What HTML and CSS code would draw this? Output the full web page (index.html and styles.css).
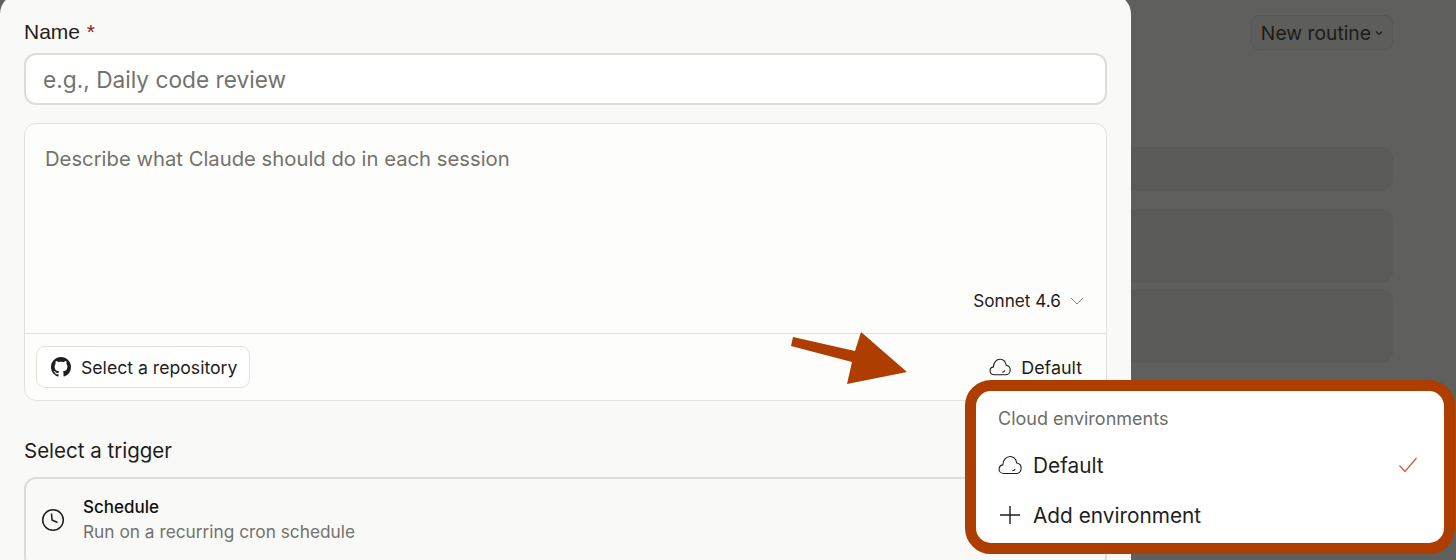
FILE: index.html
```html
<!DOCTYPE html>
<html lang="en">
  <head>
    <meta charset="UTF-8" />
    <meta name="viewport" content="width=device-width, initial-scale=1.0" />
    <title>New routine</title>
    <link rel="stylesheet" href="styles.css">
  </head>

  <body>
    <div class="page">
      <div class="backdrop">
        <div class="top-bar">
          <div class="new-btn">New routine
            <svg width="8" height="6" viewBox="0 0 8 6"><path d="M1 1.5 4 4.5 7 1.5" fill="none" stroke="#1c1c1a" stroke-width="1.2"/></svg>
          </div>
        </div>
        <div class="bg-row row-a"></div>
        <div class="bg-row row-b"></div>
        <div class="bg-row row-b"></div>
      </div>

      <div class="modal">
        <div class="label">Name <span class="req">*</span></div>
        <div class="name-input">e.g., Daily code review</div>

        <div class="editor">
          <div class="prompt">Describe what Claude should do in each session</div>
          <div class="model-row">
            Sonnet 4.6
            <svg width="14" height="8" viewBox="0 0 14 8"><path d="M1 1 7 7 13 1" fill="none" stroke="#8a8a85" stroke-width="1"/></svg>
          </div>
          <div class="editor-foot">
            <div class="repo-btn">
              <svg width="20" height="20" viewBox="0 0 16 16"><path fill="#1f1e1d" d="M8 0C3.58 0 0 3.58 0 8c0 3.54 2.29 6.53 5.47 7.59.4.07.55-.17.55-.38 0-.19-.01-.82-.01-1.49-2.01.37-2.53-.49-2.69-.94-.09-.23-.48-.94-.82-1.13-.28-.15-.68-.52-.01-.53.63-.01 1.08.58 1.23.82.72 1.21 1.87.87 2.33.66.07-.52.28-.87.51-1.07-1.78-.2-3.64-.89-3.64-3.95 0-.87.31-1.59.82-2.15-.08-.2-.36-1.02.08-2.12 0 0 .67-.21 2.2.82.64-.18 1.32-.27 2-.27s1.36.09 2 .27c1.53-1.04 2.2-.82 2.2-.82.44 1.1.16 1.92.08 2.12.51.56.82 1.27.82 2.15 0 3.07-1.87 3.75-3.65 3.95.29.25.54.73.54 1.48 0 1.07-.01 1.93-.01 2.2 0 .21.15.46.55.38A8.01 8.01 0 0 0 16 8c0-4.42-3.58-8-8-8z"/></svg>
              Select a repository
            </div>
            <div class="env">
              <svg width="22" height="18" viewBox="0 0 22 18"><path d="M5.2 16.8C2.8 16.8 1 15 1 12.8 1 10.8 2.4 9.2 4.4 8.9 4.6 4.5 7.6 1.2 11 1.2c3.4 0 5.6 2.6 6.2 6 2.4.4 4 2.4 4 4.8 0 2.8-2 4.8-4.6 4.8z" fill="none" stroke="#1f1e1d" stroke-width="1.1"/><path d="M13.2 14.2c1.2 0 2.2-.6 2.6-1.7" fill="none" stroke="#1f1e1d" stroke-width="1.1"/></svg>
              Default
            </div>
          </div>
        </div>

        <div class="trigger-title">Select a trigger</div>
        <div class="trigger-card">
          <svg width="24" height="24" viewBox="0 0 24 24"><circle cx="12" cy="12" r="10.3" fill="none" stroke="#1f1e1d" stroke-width="1.5"/><path d="M10.5 5.5 11 12l5.5 2.5" fill="none" stroke="#1f1e1d" stroke-width="1.5"/></svg>
          <div>
            <div class="trigger-name">Schedule</div>
            <div class="trigger-desc">Run on a recurring cron schedule</div>
          </div>
        </div>
      </div>

      <!-- annotation arrow drawn over the screenshot -->
      <svg class="arrow" width="120" height="60" viewBox="0 0 120 60"><path fill="#ae3d00" d="M2 6 64 20 70 1 116 41 56 53 61 31 0 15z"/></svg>

      <div class="env-menu">
        <div class="menu-title">Cloud environments</div>
        <div class="menu-item">
          <svg width="24" height="20" viewBox="0 0 22 18"><path d="M5.2 16.8C2.8 16.8 1 15 1 12.8 1 10.8 2.4 9.2 4.4 8.9 4.6 4.5 7.6 1.2 11 1.2c3.4 0 5.6 2.6 6.2 6 2.4.4 4 2.4 4 4.8 0 2.8-2 4.8-4.6 4.8z" fill="none" stroke="#1f1e1d" stroke-width="1"/><path d="M13.2 14.2c1.2 0 2.2-.6 2.6-1.7" fill="none" stroke="#1f1e1d" stroke-width="1"/></svg>
          <span class="grow">Default</span>
          <svg width="20" height="16" viewBox="0 0 20 16"><path d="M1.5 8.5 7 14.5 18.5 1" fill="none" stroke="#c6613f" stroke-width="1.3"/></svg>
        </div>
        <div class="menu-item">
          <svg width="24" height="20" viewBox="0 0 24 20"><path d="M12 1V19M2 10H22" fill="none" stroke="#1f1e1d" stroke-width="1.4"/></svg>
          <span class="grow">Add environment</span>
        </div>
      </div>
    </div>
  </body>
</html>
```

FILE: styles.css
```css
* {
  box-sizing: border-box;
}
html,
body {
  margin: 0;
  height: 100%;
}
body {
  overflow: hidden;
  font-family: Inter, "Liberation Sans", sans-serif;
  color: #1f1e1d;
  background-color: #5f5f5d;
}
.page {
  position: relative;
  width: 1456px;
  height: 560px;
  overflow: hidden;
}

/* dimmed page behind the dialog */
.backdrop {
  padding: 15px 63px 0 0;
}
.top-bar {
  display: flex;
  justify-content: flex-end;
  margin-bottom: 97px;
}
.new-btn {
  display: flex;
  align-items: center;
  gap: 4px;
  height: 35px;
  padding: 0 9px;
  border: 1px solid #575755;
  border-radius: 8px;
  background-color: #5d5d5b;
  font-size: 19.3px;
  color: #1c1c1a;
}
.bg-row {
  margin-bottom: 18px;
  border-radius: 12px;
  background-color: #5a5a58;
}
.row-a {
  height: 44px;
}
.row-b {
  height: 74px;
  margin-bottom: 6px;
}

/* dialog */
.modal {
  position: absolute;
  top: -6px;
  left: 0;
  width: 1131px;
  height: 620px;
  padding: 25px 24px 0;
  border-radius: 20px;
  background-color: #f9f9f7;
}
.label {
  height: 28px;
  font-family: "Liberation Sans", sans-serif;
  font-size: 21px;
  line-height: 26px;
}
.req {
  margin-left: 1px;
  color: #8b1a10;
}
.name-input {
  height: 52px;
  margin-top: 6px;
  padding-left: 17px;
  border: 2px solid #dddcd8;
  border-radius: 12px;
  background-color: #fff;
  font-size: 22.7px;
  line-height: 50px;
  color: #73726c;
}
.editor {
  height: 278px;
  margin-top: 18px;
  border: 1px solid #e2e1dd;
  border-radius: 12px;
  background-color: #fdfdfb;
}
.prompt {
  height: 163px;
  padding: 21px 0 0 20px;
  font-size: 20.25px;
  line-height: 28px;
  color: #73726c;
}
.model-row {
  display: flex;
  justify-content: flex-end;
  align-items: center;
  gap: 9px;
  height: 47px;
  padding: 0 22px 19px 0;
  border-bottom: 1px solid #e2e1dd;
  font-size: 17.2px;
}
.editor-foot {
  display: flex;
  justify-content: space-between;
  align-items: center;
  height: 66px;
  padding: 0 24px 0 11px;
}
.repo-btn {
  display: flex;
  align-items: center;
  gap: 10px;
  width: 214px;
  height: 42px;
  padding-left: 14px;
  border: 1px solid #e2e1dd;
  border-radius: 9px;
  background-color: #fff;
  font-size: 17.65px;
}
.env {
  display: flex;
  align-items: center;
  gap: 10px;
  font-size: 17.9px;
}
.trigger-title {
  margin-top: 36px;
  font-size: 20.5px;
  line-height: 28px;
}
.trigger-card {
  display: flex;
  align-items: center;
  gap: 18px;
  height: 92px;
  margin-top: 12px;
  padding: 0 0 6px 15px;
  border: 2px solid #dddcd8;
  border-radius: 12px;
}
.trigger-name {
  font-size: 17px;
  line-height: 24px;
  font-weight: 500;
  color: #111;
}
.trigger-desc {
  font-size: 17.3px;
  line-height: 26px;
  color: #73726c;
}

/* overlays */
.arrow {
  position: absolute;
  top: 331px;
  left: 791px;
}
.env-menu {
  position: absolute;
  top: 380px;
  left: 965px;
  width: 490px;
  height: 174px;
  padding: 15px 26px 0 22px;
  border: 11px solid #ae3d00;
  border-radius: 26px;
  background-color: #fff;
}
.menu-title {
  font-size: 18px;
  line-height: 26px;
  color: #6e6d68;
}
.menu-item {
  display: flex;
  align-items: center;
  gap: 11px;
  height: 50px;
  font-size: 20.8px;
}
.menu-title + .menu-item {
  margin-top: 8px;
}
.grow {
  flex: 1;
}
```
